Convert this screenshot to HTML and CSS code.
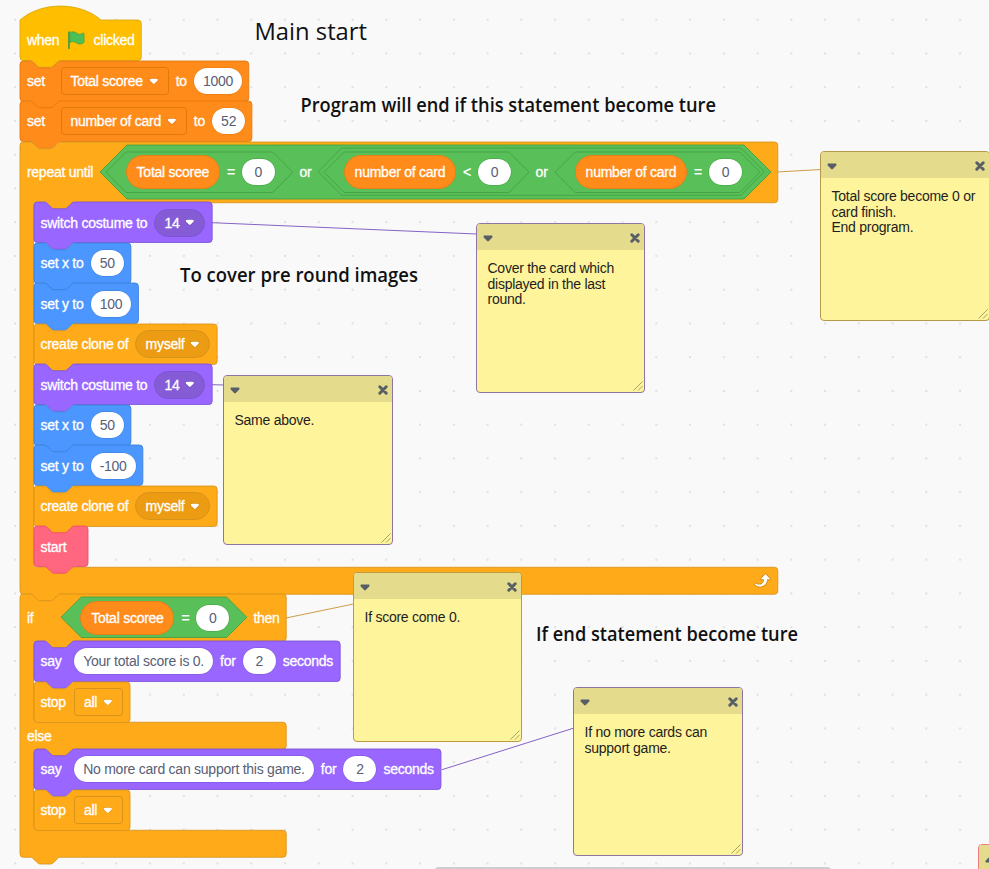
FILE: index.html
```html
<!DOCTYPE html>
<html lang="en">
<head>
<meta charset="utf-8">
<title>Main start</title>
<link rel="stylesheet" href="styles.css">
</head>
<body>
<svg class="defs" width="0" height="0">
  <symbol id="arrow" viewBox="0 0 12.71 8.79">
    <path opacity=".1" d="M12.71,2.44A2.41,2.41,0,0,1,12,4.16L8.08,8.08a2.45,2.45,0,0,1-3.45,0L0.72,4.16A2.42,2.42,0,0,1,0,2.44,2.48,2.48,0,0,1,.71.71C1,0.47,1.43,0,6.36,0S11.75,0.46,12,.71A2.44,2.44,0,0,1,12.71,2.44Z"/>
    <path fill="#fff" d="M6.36,7.79a1.43,1.43,0,0,1-1-.42L1.42,3.45a1.44,1.44,0,0,1,0-2c0.56-.56,9.31-0.56,9.87,0a1.44,1.44,0,0,1,0,2L7.37,7.37A1.43,1.43,0,0,1,6.36,7.79Z"/>
  </symbol>
  <symbol id="caret" viewBox="0 0 10 7">
    <path fill="#575e66" d="M1 .5H9Q10 1.400 9.200 2.400L5.800 6Q5 6.800 4.200 6L.8 2.400Q0 1.400 1 .5Z"/>
  </symbol>
  <symbol id="close" viewBox="0 0 10 10">
    <path stroke="#575e66" stroke-width="3" stroke-linecap="round" d="M1.800 1.800L8.200 8.200M8.200 1.800L1.800 8.200"/>
  </symbol>
  <symbol id="grip" viewBox="0 0 10 10">
    <path stroke="#a8a168" stroke-width="1" d="M.5 9.500L9.500 .5M5 9.500L9.500 5"/>
  </symbol>
</svg>

<main class="workspace">
  <svg class="captions" width="989" height="869">
    <g class="links">
      <path class="control" d="M777 172L821 169.500M286 618L353.500 604"/>
      <path class="looks" d="M212 222.700L476.500 234M212 384.700L224 385M442 769.700L574 728"/>
    </g>
    <text class="title" x="254.500" y="39.500" textLength="112.500" lengthAdjust="spacingAndGlyphs">Main start</text>
    <text x="300.500" y="111.500" textLength="415.500" lengthAdjust="spacingAndGlyphs">Program will end if this statement become ture</text>
    <text x="180" y="281.500" textLength="238" lengthAdjust="spacingAndGlyphs">To cover pre round images</text>
    <text x="536" y="640.500" textLength="262" lengthAdjust="spacingAndGlyphs">If end statement become ture</text>
  </svg>

  <div class="stack script">
    <div class="block hat events" data-shape="hat">
      <span>when</span>
      <svg class="flag" viewBox="0 0 24 24"><path fill="#45993d" d="M2.500 2.500q0-1 1-1t1 1V21.500q0 1-1 1t-1-1Z"/><path fill="#4cbf56" stroke="#45993d" stroke-width=".8" d="M4.500 2.900c2.700-1.300 6-.9 8.300 1 2 1.600 4.800 1.600 6.800 0 .7-.5 1.800 0 1.800.8V14.500c-2.900 2.700-7 2.700-9.900.4-2.200-1.800-5-1.500-7 .1Z"/></svg>
      <span>clicked</span>
    </div>
    <div class="block data" data-shape="stack">
      <span class="lead">set</span><span class="menu">Total scoree<svg><use href="#arrow"/></svg></span><span>to</span><span class="input">1000</span>
    </div>
    <div class="block data" data-shape="stack">
      <span class="lead">set</span><span class="menu">number of card<svg><use href="#arrow"/></svg></span><span>to</span><span class="input">52</span>
    </div>

    <div class="cblock control" data-shape="c">
      <div class="head tall">
        <span>repeat until</span>
        <div class="hex h64" data-shape="hex">
          <div class="hex h48" data-shape="hex"><span class="var">Total scoree</span><span>=</span><span class="input">0</span></div>
          <span>or</span>
          <div class="hex h56" data-shape="hex">
            <div class="hex h48" data-shape="hex"><span class="var">number of card</span><span>&lt;</span><span class="input">0</span></div>
            <span>or</span>
            <div class="hex h48" data-shape="hex"><span class="var">number of card</span><span>=</span><span class="input">0</span></div>
          </div>
        </div>
      </div>
      <div class="stack body">
        <div class="block looks" data-shape="stack"><span>switch costume to</span><span class="menu round">14<svg><use href="#arrow"/></svg></span></div>
        <div class="block motion" data-shape="stack"><span>set x to</span><span class="input">50</span></div>
        <div class="block motion" data-shape="stack"><span>set y to</span><span class="input">100</span></div>
        <div class="block control" data-shape="stack"><span>create clone of</span><span class="menu round">myself<svg><use href="#arrow"/></svg></span></div>
        <div class="block looks" data-shape="stack"><span>switch costume to</span><span class="menu round">14<svg><use href="#arrow"/></svg></span></div>
        <div class="block motion" data-shape="stack"><span>set x to</span><span class="input">50</span></div>
        <div class="block motion" data-shape="stack"><span>set y to</span><span class="input">-100</span></div>
        <div class="block control" data-shape="stack"><span>create clone of</span><span class="menu round">myself<svg><use href="#arrow"/></svg></span></div>
        <div class="block custom" data-shape="stack"><span>start</span></div>
      </div>
      <div class="foot">
        <svg class="loop" viewBox="0 0 24 24"><path fill="#cf8b17" d="M23.3,11c-0.3,0.6-0.9,1-1.5,1h-1.6c-0.1,1.3-0.5,2.5-1.1,3.6c-0.9,1.7-2.3,3.2-4.1,4.1c-1.7,0.9-3.6,1.2-5.5,0.9c-1.8-0.3-3.5-1.1-4.9-2.3c-0.7-0.7-0.7-1.9,0-2.6c0.6-0.6,1.6-0.7,2.3-0.2H7c0.9,0.6,1.9,0.9,2.9,0.9s1.9-0.3,2.7-0.9c1.1-0.8,1.8-2.1,1.8-3.5h-1.5c-0.9,0-1.7-0.7-1.7-1.7c0-0.4,0.2-0.9,0.5-1.2l4.4-4.4c0.7-0.6,1.7-0.6,2.4,0L23,9.2C23.5,9.7,23.6,10.4,23.3,11z"/><path fill="#fff" d="M21.8,11h-2.6c0,1.5-0.3,2.9-1,4.2c-0.8,1.6-2.1,2.8-3.7,3.6c-1.5,0.8-3.3,1.1-4.9,0.8c-1.6-0.2-3.2-1-4.4-2.1c-0.4-0.3-0.4-0.9-0.1-1.2c0.3-0.4,0.9-0.4,1.2-0.1c1,0.7,2.2,1.1,3.4,1.1s2.3-0.3,3.3-1c0.9-0.6,1.6-1.5,2-2.6c0.3-0.9,0.4-1.8,0.2-2.8h-2.4c-0.4,0-0.7-0.3-0.7-0.7c0-0.2,0.1-0.3,0.2-0.4l4.4-4.4c0.3-0.3,0.7-0.3,0.9,0L22,9.8c0.3,0.3,0.4,0.6,0.3,0.9S22,11,21.8,11z"/></svg>
      </div>
    </div>

    <div class="cblock control" data-shape="c">
      <div class="head">
        <span class="lead">if</span>
        <div class="hex h48" data-shape="hex"><span class="var">Total scoree</span><span>=</span><span class="input">0</span></div>
        <span>then</span>
      </div>
      <div class="stack body">
        <div class="block looks" data-shape="stack"><span class="lead">say</span><span class="input">Your total score is 0.</span><span>for</span><span class="input">2</span><span>seconds</span></div>
        <div class="block control" data-shape="cap"><span class="lead">stop</span><span class="menu">all<svg><use href="#arrow"/></svg></span></div>
      </div>
      <div class="mid"><span>else</span></div>
      <div class="stack body">
        <div class="block looks" data-shape="stack"><span class="lead">say</span><span class="input">No more card can support this game.</span><span>for</span><span class="input">2</span><span>seconds</span></div>
        <div class="block control" data-shape="cap"><span class="lead">stop</span><span class="menu">all<svg><use href="#arrow"/></svg></span></div>
      </div>
      <div class="foot"></div>
    </div>
  </div>

  <article class="note n1"><header><svg class="caret"><use href="#caret"/></svg><svg class="close"><use href="#close"/></svg></header><p>Total score become 0 or<br>card finish.<br>End program.</p><svg class="grip"><use href="#grip"/></svg></article>
  <article class="note n2"><header><svg class="caret"><use href="#caret"/></svg><svg class="close"><use href="#close"/></svg></header><p>Cover the card which<br>displayed in the last<br>round.</p><svg class="grip"><use href="#grip"/></svg></article>
  <article class="note n3"><header><svg class="caret"><use href="#caret"/></svg><svg class="close"><use href="#close"/></svg></header><p>Same above.</p><svg class="grip"><use href="#grip"/></svg></article>
  <article class="note n4"><header><svg class="caret"><use href="#caret"/></svg><svg class="close"><use href="#close"/></svg></header><p>If score come 0.</p><svg class="grip"><use href="#grip"/></svg></article>
  <article class="note n5"><header><svg class="caret"><use href="#caret"/></svg><svg class="close"><use href="#close"/></svg></header><p>If no more cards can<br>support game.</p><svg class="grip"><use href="#grip"/></svg></article>
  <article class="note n6"><header><svg class="caret up"><use href="#caret"/></svg></header></article>
  <div class="scrollbar"></div>
</main>
<script src="blocks.js"></script>
</body>
</html>
```
FILE: styles.css
```css
* { box-sizing: border-box; }
html, body { margin: 0; height: 100%; overflow: hidden; }
body { font: 14px/16px "Liberation Sans", Arial, sans-serif; letter-spacing: -0.25px; }
.defs { position: absolute; }

.workspace {
  position: relative;
  width: 989px;
  height: 869px;
  overflow: hidden;
  background: #f9f9f9 radial-gradient(circle, #e0e0e0 0.7px, transparent 1.2px) -1.8px 2.8px / 33.75px 33.75px;
}
.captions { position: absolute; inset: 0; letter-spacing: 0; }
.captions text { font: 600 19px "Open Sans", "Noto Sans", sans-serif; fill: #111; }
.captions .title { font-size: 24px; font-weight: 400; }
.links path { fill: none; stroke-width: 1; }
.links .control { stroke: #cf9c46; }
.links .looks { stroke: #8562c4; }

/* Blocks: one design unit is 0.84375px */
.events { --fill: #ffbf00; --line: #d9a60a; }
.data { --fill: #ff8c1a; --line: #e0780c; }
.control { --fill: #ffab19; --line: #d8931b; --slot: #ec9c13; }
.looks { --fill: #9966ff; --line: #7d54d4; --slot: #855cd6; }
.motion { --fill: #4c97ff; --line: #3b7dd8; }
.custom { --fill: #ff6680; --line: #f04a66; }
.hex { --fill: #59c059; --line: #429f42; }

.stack { display: flex; flex-direction: column; align-items: flex-start; }
.script { position: absolute; left: 20px; top: 20px; }
.block, .head, .hex { display: flex; align-items: center; gap: 7px; white-space: nowrap; color: #fff; }
.block { position: relative; z-index: 0; height: 40.5px; min-width: 54px; padding: 0.3px 6.6px 0 6.9px; }
.block.hat { padding-top: 0; }
.cblock { position: relative; z-index: 0; color: #fff; }
.head { height: 47.25px; padding: 0.6px 6.6px 0 6.9px; width: max-content; }
.head.tall { height: 60.75px; padding-top: 0; }
.body { margin-left: 13.5px; width: 0; }
.mid { height: 27px; padding: 6px 6.9px; }
.foot { height: 27px; display: flex; justify-content: flex-end; padding: 3.4px 6.75px; }
.loop { width: 20.25px; height: 20.25px; }
.lead { width: 26.7px; }
.flag { width: 20.25px; height: 20.25px; }
.block > span, .head > span, .hex > span, .mid > span { -webkit-text-stroke: 0.3px currentColor; }

.shape { position: absolute; left: 0; top: 0; width: 1px; height: 1px; overflow: visible; z-index: -1; }
.shape path { fill: var(--fill); stroke: var(--line); stroke-width: 1; }

.block > .input, .hex > .input {
  height: 26px;
  min-width: 33px;
  padding: 0 9.1px;
  border-radius: 13px;
  background: #fff;
  box-shadow: 0 0 0 0.5px var(--line);
  color: #575e75;
  line-height: 26.5px;
  text-align: center;
  -webkit-text-stroke: 0;
}
.menu { height: 28px; padding: 0 9px 0 8.8px; border: 1px solid var(--line); border-radius: 3.4px; display: flex; align-items: center; gap: 6.2px; }
.menu svg { width: 9.6px; height: 6.7px; }
.block > .menu.round { height: 28px; border-radius: 14px; background: var(--slot); padding: 0 9px; gap: 6px; }
.var { height: 33.75px; padding: 0 9.8px; border: 1px solid #e67f17; border-radius: 17px; background: #ff8c1a; line-height: 32px; }

.hex { position: relative; z-index: 0; }
.h48 { height: 40.5px; padding: 0 17.6px 0 20.25px; }
.head > .h48 { padding: 0 17px 0 19.8px; }
.h56 { height: 47.25px; padding: 0 5.2px; }
.h64 { height: 54px; padding: 0 6.4px 0 5.4px; }

/* Workspace comments */
.note { position: absolute; width: 169px; height: 169px; border: 1px solid #a68f52; border-radius: 4px; background: #fef49c; color: #1e1e1e; overflow: hidden; }
.note header { height: 26px; padding: 1px 4.5px 0 6px; background: #e4db8c; display: flex; align-items: center; justify-content: space-between; }
.note p { margin: 11.2px 0 0 10.5px; line-height: 15.4px; white-space: nowrap; }
.note .caret { width: 10px; height: 7px; margin-top: 1px; }
.note .caret.up { transform: rotate(180deg); }
.note .close { width: 10px; height: 10px; }
.note .grip { position: absolute; right: 1px; bottom: 1px; width: 10px; height: 10px; }
.n1 { left: 820px; top: 151px; width: 170px; height: 170px; border-color: #b59a4c; }
.n2 { left: 476px; top: 223px; height: 170px; border-color: #8d76a5; }
.n3 { left: 223px; top: 375px; height: 170px; width: 170px; border-color: #8d76a5; }
.n4 { left: 353px; top: 572px; height: 170px; border-color: #bd9a44; }
.n5 { left: 573px; top: 687px; width: 170px; border-color: #8d76a5; }
.n6 { left: 978px; top: 844px; border-color: #ee7d7d; }
.scrollbar { position: absolute; left: 434px; top: 867px; width: 398px; height: 10px; border-radius: 5px; background: #cecdce; }
```
FILE: blocks.js
```js
// Draws the outline of every block from its laid-out size.
const U = 0.84375;
const NOTCH = 'c2 0 3 1 4 2l4 4c1 1 2 2 4 2h12c2 0 3-1 4-2l4-4c1-1 2-2 4-2';
const TAB = 'c-2 0-3 1-4 2l-4 4c-1 1-2 2-4 2h-12c-2 0-3-1-4-2l-4-4c-1-1-2-2-4-2';
const right = (w, y0, y1) => `H${w - 4}a4 4 0 0 1 4 4V${y1 - 4}a4 4 0 0 1-4 4`;

function outline(kind, el, w, h) {
  if (kind === 'hex') {
    const r = h / 2;
    return `M${r} 0H${w - r}L${w} ${r}L${w - r} ${h}H${r}L0 ${r}Z`;
  }
  const close = 'H4a4 4 0 0 1-4-4';
  if (kind === 'hat') return `M0 0c25-22 71-22 96 0${right(w, 0, h)}H48${TAB}${close}Z`;
  const top = `M0 4a4 4 0 0 1 4-4H12${NOTCH}`;
  if (kind === 'cap') return top + right(w, 0, h) + close + 'Z';
  if (kind === 'stack') return top + right(w, 0, h) + 'H48' + TAB + close + 'Z';
  let d = top;
  let y = 0;
  for (const part of el.children) {
    const ph = part.getBoundingClientRect().height / U;
    if (part.classList.contains('body')) {
      d += `H64${TAB}H20a4 4 0 0 0-4 4V${y + ph - 4}a4 4 0 0 0 4 4`;
    } else {
      d += right(w, y, y + ph);
    }
    y += ph;
  }
  return d + 'H48' + TAB + close + 'Z';
}

for (const el of document.querySelectorAll('[data-shape]')) {
  const box = el.getBoundingClientRect();
  const d = outline(el.dataset.shape, el, box.width / U, box.height / U);
  const svg = document.createElementNS('http://www.w3.org/2000/svg', 'svg');
  const path = document.createElementNS('http://www.w3.org/2000/svg', 'path');
  svg.setAttribute('class', 'shape');
  path.setAttribute('d', d);
  path.setAttribute('transform', `scale(${U})`);
  svg.append(path);
  el.append(svg);
}
```
